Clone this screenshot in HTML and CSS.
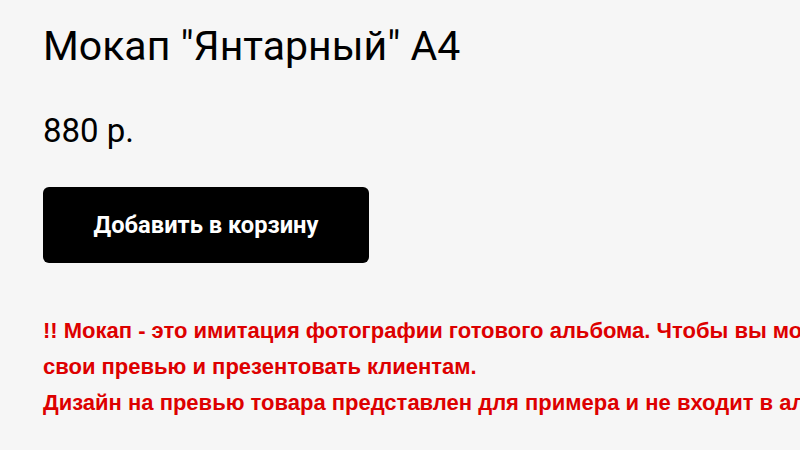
FILE: index.html
```html
<!DOCTYPE html>
<html lang="ru">
<head>
<meta charset="utf-8">
<link rel="stylesheet" href="styles.css">
</head>
<body>
<div class="product">
  <h1 class="title">Мокап "Янтарный" А4</h1>
  <div class="price">880 р.</div>
  <button class="buy">Добавить в корзину</button>
  <div class="note">
    <p>!! Мокап - это имитация фотографии готового альбома. Чтобы вы могли вставить свои превью и презентовать клиентам.</p>
    <p>Дизайн на превью товара представлен для примера и не входит в альбом.</p>
  </div>
</div>
</body>
</html>
```
FILE: styles.css
```css
html, body {
  margin: 0;
  padding: 0;
  background: #f6f6f6;
  overflow: hidden;
}
.product {
  padding: 20px 0 0 43px;
  font-family: Roboto, "Noto Sans", sans-serif;
  color: #000;
}
.title {
  margin: 0;
  font-size: 41px;
  font-weight: 400;
  line-height: 52px;
}
.price {
  margin-top: 39px;
  font-size: 33px;
  line-height: 40px;
}
.buy {
  display: flex;
  align-items: center;
  justify-content: center;
  margin-top: 36px;
  width: 326px;
  height: 76px;
  border: 0;
  border-radius: 6px;
  background: #000;
  color: #fff;
  font-family: Roboto, sans-serif;
  font-weight: 700;
  font-size: 23.7px;
}
.note {
  margin-top: 50px;
  width: 915px;
  color: #dd0000;
  font-family: "Liberation Sans", Arial, sans-serif;
  font-weight: 700;
  font-size: 22px;
  line-height: 36px;
}
.note p {
  margin: 0;
}
```
